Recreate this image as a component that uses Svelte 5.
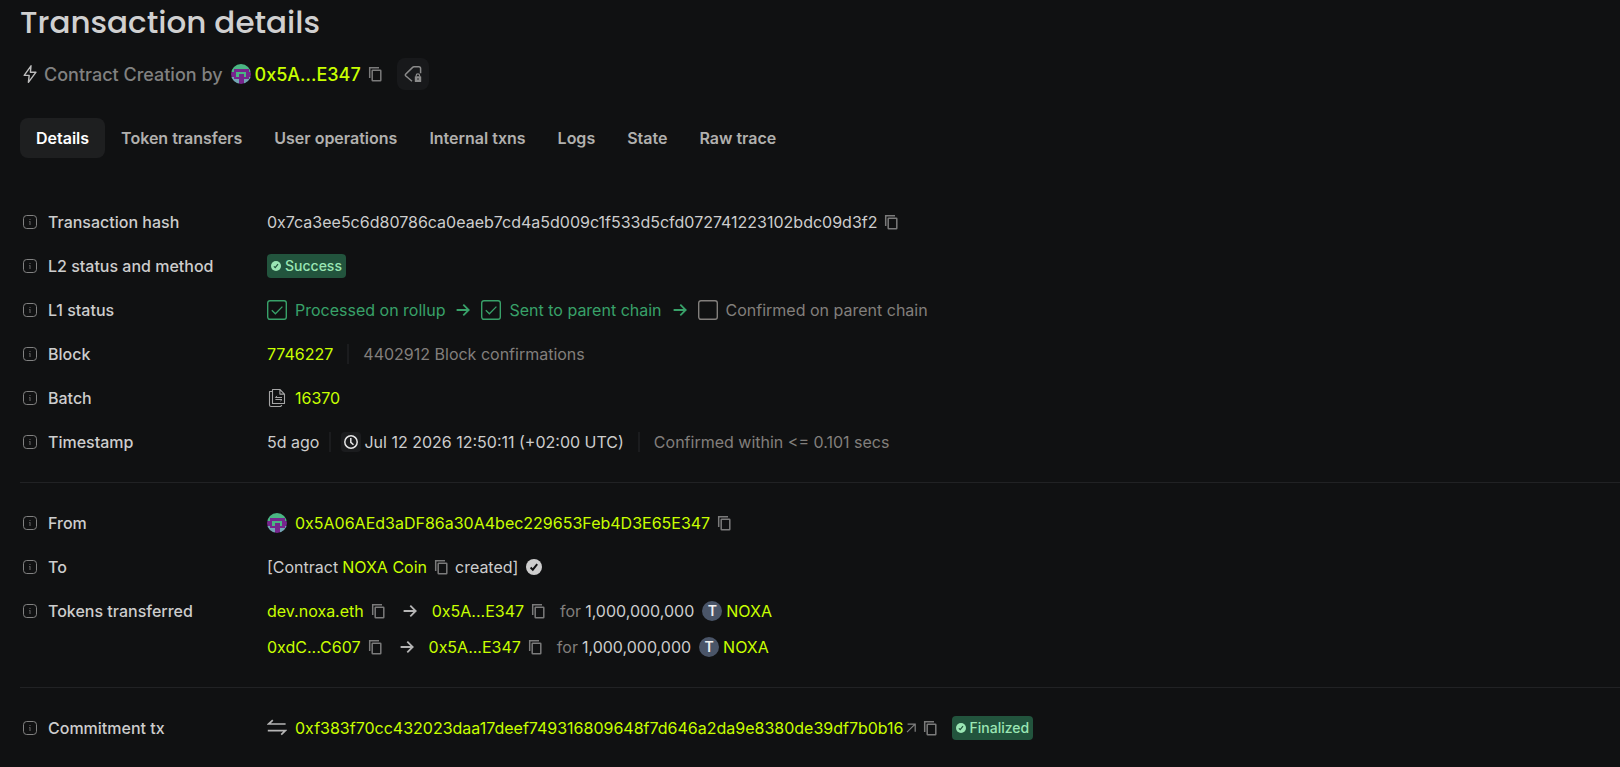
<script>
  const tabs = ['Details', 'Token transfers', 'User operations', 'Internal txns', 'Logs', 'State', 'Raw trace'];
  let active = $state('Details');

  const transfers = [
    { from: 'dev.noxa.eth', to: '0x5A...E347', amount: '1,000,000,000', token: 'NOXA' },
    { from: '0xdC...C607', to: '0x5A...E347', amount: '1,000,000,000', token: 'NOXA' }
  ];

  // Left half of the 8x8 identicon; each row is mirrored. 0 green, 1 purple, 2 teal
  const half = ['0000', '0000', '0111', '1100', '1101', '2111', '2221', '0021'];
  const colors = ['#4bb583', '#76258d', '#74a5b4'];
  const cells = half.flatMap((row, y) =>
    [...row, ...[...row].reverse()].map((c, x) => ({ x, y, fill: colors[+c] }))
  );
</script>

{#snippet copy()}
  <button class="copy" aria-label="Copy to clipboard">
    <svg width="20" height="20" viewBox="0 0 20 20" fill="none" stroke="currentColor" stroke-width="1.5">
      <path d="M4.7 14V3.7H14" />
      <rect x="7.2" y="6.2" width="8.6" height="10.6" rx=".6" />
    </svg>
  </button>
{/snippet}

{#snippet label(text)}
  <dt>
    <svg width="20" height="20" viewBox="0 0 20 20" fill="none" stroke="#818181">
      <rect x="3.5" y="3.5" width="13" height="13" rx="3.2" />
      <path d="M10 9.2V13M10 7v1M9.3 9.5h.7" stroke="#6a6a6a" />
    </svg>
    <span>{text}</span>
  </dt>
{/snippet}

{#snippet avatar()}
  <svg class="avatar" width="20" height="20" viewBox="0 0 8 8" shape-rendering="crispEdges">
    {#each cells as c}
      <rect x={c.x} y={c.y} width="1" height="1" fill={c.fill} />
    {/each}
  </svg>
{/snippet}

{#snippet arrow()}
  <svg class="arrow" width="20" height="20" viewBox="0 0 20 20" fill="none" stroke="currentColor" stroke-width="1.8">
    <path d="M3.600 10h12M10.300 4.600l5.400 5.400-5.400 5.400" />
  </svg>
{/snippet}

{#snippet seal(size)}
  <svg width={size} height={size} viewBox="0 0 16 16" class="seal">
    <circle cx="8" cy="8" r="8" fill="currentColor" />
    <path d="M4.6 8.5l2.2 2.2 4.4-5.6" fill="none" stroke="var(--mark)" stroke-width="1.9" />
  </svg>
{/snippet}

{#snippet step(text, done)}
  <span class="step" class:done>
    <svg width="20" height="20" viewBox="0 0 20 20" fill="none" stroke="currentColor">
      <rect x=".7" y=".7" width="18.6" height="18.6" rx="2.2" stroke-width="1.4" />
      {#if done}<path d="M4.8 10.2l3.6 3.6 7-7.2" stroke-width="1.3" />{/if}
    </svg>
    <span>{text}</span>
  </span>
{/snippet}

<main>
  <h1>Transaction details</h1>

  <div class="subtitle">
    <svg class="bolt" width="20" height="20" viewBox="0 0 20 20" fill="none" stroke="#bdbdbd" stroke-width="1.4" stroke-linejoin="round">
      <path d="M11 1.800L4.200 11.400h5l-.8 7 7.600-10.200h-5.600z" />
    </svg>
    <span class="method">Contract Creation by</span>
    {@render avatar()}
    <a href="#address">0x5A...E347</a>
    {@render copy()}
    <button class="tag" aria-label="Add private tag">
      <svg width="20" height="20" viewBox="0 0 20 20" fill="none" stroke="#8b8b8b" stroke-width="1.5">
        <path d="M9 17.200L2.600 11.700a1 1 0 0 1 0-1.400l7-6.900a2 2 0 0 1 1.400-.6h4.800a1.800 1.800 0 0 1 1.800 1.800V9.200" />
        <path d="M13.200 12.600v-1a1.700 1.700 0 0 1 3.400 0v1" stroke-width="1.2" />
        <rect x="11.800" y="12.200" width="6.400" height="5.800" rx=".5" fill="#8b8b8b" stroke="none" />
        <circle cx="15" cy="15" r=".8" fill="#18191b" stroke="none" />
      </svg>
    </button>
  </div>

  <div class="tabs" role="tablist">
    {#each tabs as tab}
      <button role="tab" aria-selected={tab === active} onclick={() => (active = tab)}>{tab}</button>
    {/each}
  </div>

  <dl>
    {@render label('Transaction hash')}
    <dd>
      <span>0x7ca3ee5c6d80786ca0eaeb7cd4a5d009c1f533d5cfd072741223102bdc09d3f2</span>
      {@render copy()}
    </dd>

    {@render label('L2 status and method')}
    <dd><span class="badge">{@render seal(10)}Success</span></dd>

    {@render label('L1 status')}
    <dd class="steps">
      {@render step('Processed on rollup', true)}
      {@render arrow()}
      {@render step('Sent to parent chain', true)}
      {@render arrow()}
      {@render step('Confirmed on parent chain', false)}
    </dd>

    {@render label('Block')}
    <dd>
      <a href="#block">7746227</a>
      <i class="sep wide"></i>
      <span class="muted">4402912 Block confirmations</span>
    </dd>

    {@render label('Batch')}
    <dd>
      <svg class="lead" width="20" height="20" viewBox="0 0 20 20" fill="none" stroke="#a5a5a5" stroke-width="1.1" stroke-linejoin="round">
        <path d="M5.500 1.500h7.400l4.600 4.600v9.400h-12zM12.900 1.500v4.600h4.600" />
        <path d="M5.500 3.500h-3v13.400a1.600 1.600 0 0 0 1.600 1.600h9.400l1.400-1.400" />
        <path d="M15 9.500H8.400l1.600-1.600M8.400 11.500H15l-1.600 1.600" stroke-width="1" />
      </svg>
      <a href="#batch">16370</a>
    </dd>

    {@render label('Timestamp')}
    <dd>
      <span>5d ago</span>
      <i class="sep"></i>
      <button class="clock" aria-label="Toggle time format">
        <svg width="20" height="20" viewBox="0 0 20 20" fill="none" stroke="#e6e6e6" stroke-width="1.5">
          <circle cx="10" cy="10" r="6.200" />
          <path d="M9.800 6v4.300l2.700 2.500" />
        </svg>
      </button>
      <span>Jul 12 2026 12:50:11 (+02:00 UTC)</span>
      <i class="sep wide"></i>
      <span class="muted">Confirmed within &lt;= 0.101 secs</span>
    </dd>
  </dl>

  <dl>
    {@render label('From')}
    <dd>
      <span class="lead">{@render avatar()}</span>
      <a href="#from">0x5A06AEd3aDF86a30A4bec229653Feb4D3E65E347</a>
      {@render copy()}
    </dd>

    {@render label('To')}
    <dd>
      <span class="before">[Contract</span>
      <a href="#contract">NOXA Coin</a>
      {@render copy()}
      <span class="created">created]</span>
      {@render seal(16)}
    </dd>

    {@render label('Tokens transferred')}
    <dd class="transfers">
      {#each transfers as t}
        <div class="transfer">
          <a href="#sender">{t.from}</a>
          {@render copy()}
          {@render arrow()}
          <a href="#recipient">{t.to}</a>
          {@render copy()}
          <span class="for">for</span>
          <span>{t.amount}</span>
          <b class="token">T</b>
          <a href="#token">{t.token}</a>
        </div>
      {/each}
    </dd>
  </dl>

  <dl>
    {@render label('Commitment tx')}
    <dd>
      <svg class="lead" width="20" height="20" viewBox="0 0 20 20" fill="none" stroke="#b5b5b5" stroke-width="1.7">
        <path d="M18.600 6H1.600L5.800 2.200M.8 12.600h17.600l-4.200 4" />
      </svg>
      <a href="#commitment">0xf383f70cc432023daa17deef749316809648f7d646a2da9e8380de39df7b0b16</a>
      <svg class="external" width="10" height="10" viewBox="0 0 10 10" fill="none" stroke="#818181" stroke-width="1.2">
        <path d="M1 9.200l7.600-7.600M1.600 1.200h7.600v7.600" />
      </svg>
      {@render copy()}
      <span class="badge final">{@render seal(10)}Finalized</span>
    </dd>
  </dl>
</main>

<style>
  :global(body) {
    background: #101112;
  }
  main {
    padding: 2px 0 22px 20px;
    font: 400 16px/24px Inter, sans-serif;
    color: #cdcdcd;
  }
  svg {
    display: block;
    flex: none;
  }
  h1 {
    margin: 0 0 16px;
    font: 500 31px/40px Poppins, Inter, sans-serif;
    color: #d0d0d0;
  }
  a {
    color: #c8ff00;
    text-decoration: none;
  }
  button {
    flex: none;
    border: 0;
    padding: 0;
    background: none;
    font: inherit;
    color: inherit;
    cursor: pointer;
  }
  .subtitle {
    display: flex;
    align-items: center;
    height: 32px;
    font-size: 18px;
    line-height: 25px;
    font-weight: 500;
  }
  .method {
    margin: 0 8px 0 4px;
    color: #818181;
  }
  .subtitle a {
    margin-left: 4px;
  }
  .avatar {
    border-radius: 50%;
  }
  .copy {
    margin-left: 4px;
    color: #7b7b7b;
  }
  .tag {
    display: grid;
    place-items: center;
    width: 32px;
    height: 32px;
    margin-left: 12px;
    border-radius: 8px;
    background: #18191b;
  }
  .tabs {
    display: flex;
    margin: 28px 0 48px;
    font-weight: 600;
  }
  .tabs button {
    height: 40px;
    padding: 0 16px;
    border-radius: 8px;
    color: #b1b0ae;
  }
  .tabs button[aria-selected='true'] {
    background: #1e1f20;
    color: #fff;
  }
  dl {
    display: grid;
    grid-template-columns: 239px 1fr;
    gap: 12px 8px;
    margin: 0;
  }
  dl + dl {
    margin-top: 24px;
    padding-top: 24px;
    border-top: 1px solid #212224;
  }
  dt,
  dd,
  .transfer {
    display: flex;
    align-items: center;
    min-height: 32px;
    margin: 0;
    white-space: nowrap;
  }
  dt {
    align-self: start;
    gap: 8px;
    font-weight: 500;
  }
  .badge {
    display: flex;
    align-items: center;
    gap: 4px;
    height: 24px;
    padding: 0 4px;
    border-radius: 4px;
    background: #22543d;
    color: #9ae6b4;
    font-size: 14px;
    font-weight: 500;
  }
  .final {
    margin-left: 12px;
  }
  .seal {
    --mark: #101112;
  }
  .badge .seal {
    --mark: #22543d;
  }
  .steps {
    gap: 8px;
    color: #38a169;
  }
  .step {
    display: flex;
    gap: 8px;
    align-items: center;
    color: #827f7c;
  }
  .done {
    color: #38a169;
  }
  .muted,
  .for {
    color: #827f7c;
  }
  .sep {
    width: 2px;
    height: 20px;
    margin: 0 10px;
    background: #1b1c1e;
  }
  .wide {
    margin: 0 14px;
  }
  .lead {
    margin-right: 8px;
  }
  .clock {
    margin-right: 3px;
    border-radius: 4px;
    background: #1b1c1e;
  }
  .before {
    margin-right: 4px;
  }
  .created {
    margin: 0 8px 0 4px;
  }
  .transfers {
    display: grid;
    gap: 4px;
  }
  .transfer .arrow {
    margin: 0 12px;
    color: #b5b5b5;
  }
  .for {
    margin: 0 4px 0 12px;
  }
  .token {
    width: 20px;
    margin: 0 4px 0 8px;
    border-radius: 50%;
    background: #4a5568;
    color: #f0f0f0;
    font-size: 14px;
    font-weight: 600;
    line-height: 20px;
    text-align: center;
  }
  .external {
    margin-left: 2px;
  }
</style>
